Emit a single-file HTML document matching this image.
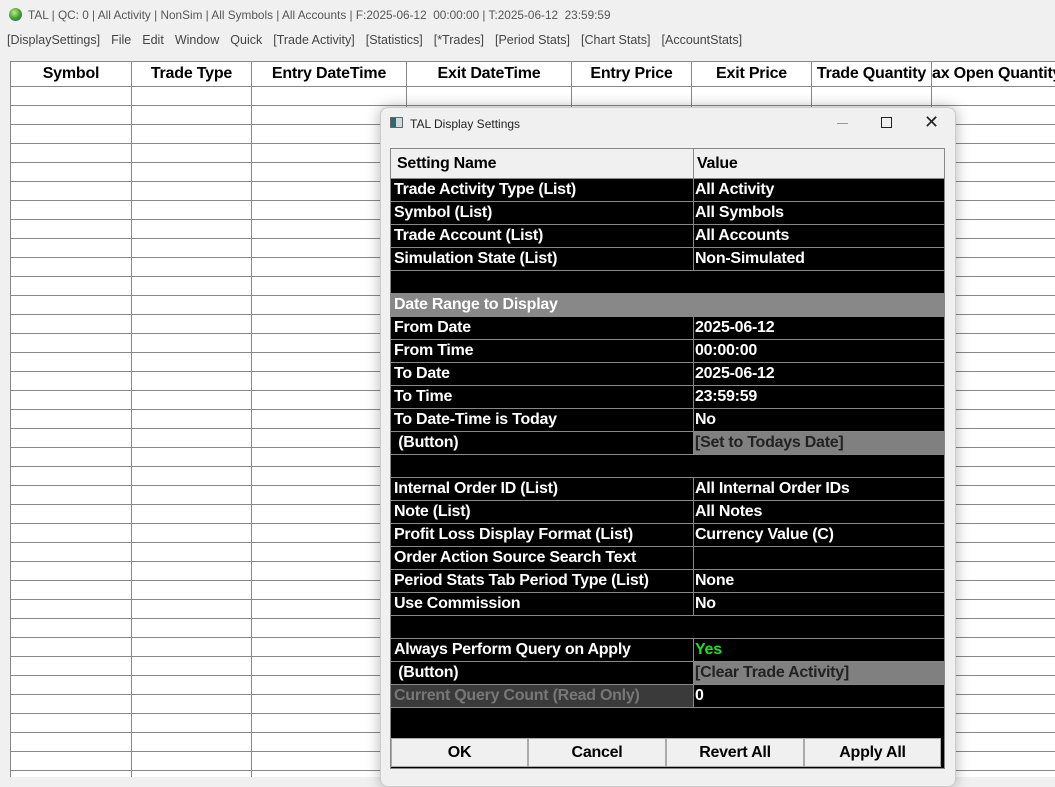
<!DOCTYPE html>
<html><head><meta charset="utf-8"><style>
*{margin:0;padding:0;box-sizing:border-box}
body{width:1055px;height:777px;overflow:hidden;background:#f0f0f0;font-family:"Liberation Sans",Arial,sans-serif;position:relative}
.t{position:absolute;left:28px;top:8px;font-size:11.8px;color:#555;white-space:nowrap}
.m{position:absolute;top:33px;left:7px;font-size:12.5px;color:#444;white-space:nowrap;word-spacing:0}
.m span{margin-right:11px}
.grid{position:absolute;left:10px;top:61px;width:1045px;height:716px;background:#fff;border-left:1px solid #888;border-top:1px solid #888;overflow:hidden}
.hd{position:absolute;top:0;height:25px;border-right:1px solid #888;border-bottom:1px solid #888;font-weight:bold;font-size:16px;text-align:center;line-height:24px;white-space:nowrap;overflow:hidden;background:#fff;letter-spacing:-0.2px}
.vl{position:absolute;top:25px;bottom:0;width:1px;background:#888}
.hl{position:absolute;left:0;right:0;height:1px;background:#888}
.dlg{position:absolute;left:380px;top:107px;width:576px;height:680px;background:#f0f0f0;border:1px solid #ccc;border-radius:8px;box-shadow:0 0 14px rgba(0,0,0,.3)}
.dt{position:absolute;left:29px;top:9px;font-size:12px;color:#222}
.tbl{position:absolute;left:9px;top:40px;width:555px;height:621px;background:#000;border:1px solid #888}
.r{position:absolute;left:0;width:553px;height:23px;border-bottom:1px solid #888;color:#fff;font-weight:bold;font-size:16px;line-height:22px;letter-spacing:-0.25px}
.r .a{position:absolute;left:3px;top:0;white-space:nowrap}
.r .b{position:absolute;left:302px;top:0;width:251px;height:22px;border-left:1px solid #888;padding-left:1px;white-space:nowrap}
.btn{position:absolute;height:29px;background:#f0f0f0;border:1px solid #aaa;font-weight:bold;font-size:16px;text-align:center;line-height:28px;color:#000;letter-spacing:-0.25px}
</style></head><body>
<div style="position:absolute;left:9px;top:8px;width:13px;height:13px;border-radius:50%;background:radial-gradient(circle at 40% 35%,#bfe88a,#3a9a2a 55%,#1d5a9a)"></div>
<div class="t">TAL | QC: 0 | All Activity | NonSim | All Symbols | All Accounts | F:2025-06-12&nbsp; 00:00:00 | T:2025-06-12&nbsp; 23:59:59</div>
<div class="m"><span>[DisplaySettings]</span><span>File</span><span>Edit</span><span>Window</span><span>Quick</span><span>[Trade Activity]</span><span>[Statistics]</span><span>[*Trades]</span><span>[Period Stats]</span><span>[Chart Stats]</span><span>[AccountStats]</span></div>
<div class="grid">
<div class="hd" style="left:0;width:121px">Symbol</div>
<div class="hd" style="left:121px;width:120px">Trade Type</div>
<div class="hd" style="left:241px;width:155px">Entry DateTime</div>
<div class="hd" style="left:396px;width:165px">Exit DateTime</div>
<div class="hd" style="left:561px;width:120px">Entry Price</div>
<div class="hd" style="left:681px;width:120px">Exit Price</div>
<div class="hd" style="left:801px;width:120px">Trade Quantity</div>
<div class="hd" style="left:921px;width:130px;text-align:left;text-indent:0">ax Open Quantity</div>
<div class="vl" style="left:120px"></div><div class="vl" style="left:240px"></div><div class="vl" style="left:395px"></div><div class="vl" style="left:560px"></div><div class="vl" style="left:680px"></div><div class="vl" style="left:800px"></div><div class="vl" style="left:920px"></div>
<div class="hl" style="top:43px"></div><div class="hl" style="top:62px"></div><div class="hl" style="top:81px"></div><div class="hl" style="top:100px"></div><div class="hl" style="top:119px"></div><div class="hl" style="top:138px"></div><div class="hl" style="top:157px"></div><div class="hl" style="top:176px"></div><div class="hl" style="top:195px"></div><div class="hl" style="top:214px"></div><div class="hl" style="top:233px"></div><div class="hl" style="top:252px"></div><div class="hl" style="top:271px"></div><div class="hl" style="top:290px"></div><div class="hl" style="top:309px"></div><div class="hl" style="top:328px"></div><div class="hl" style="top:347px"></div><div class="hl" style="top:366px"></div><div class="hl" style="top:385px"></div><div class="hl" style="top:404px"></div><div class="hl" style="top:423px"></div><div class="hl" style="top:442px"></div><div class="hl" style="top:461px"></div><div class="hl" style="top:480px"></div><div class="hl" style="top:499px"></div><div class="hl" style="top:518px"></div><div class="hl" style="top:537px"></div><div class="hl" style="top:556px"></div><div class="hl" style="top:575px"></div><div class="hl" style="top:594px"></div><div class="hl" style="top:613px"></div><div class="hl" style="top:632px"></div><div class="hl" style="top:651px"></div><div class="hl" style="top:670px"></div><div class="hl" style="top:689px"></div><div class="hl" style="top:708px"></div>
</div>
<div class="dlg">
<div style="position:absolute;left:9px;top:9px;width:13px;height:11px;border:1px solid #666;background:linear-gradient(90deg,#2a6a6a 45%,#cfd8dc 45%)"></div>
<div class="dt">TAL Display Settings</div>
<div style="position:absolute;left:456px;top:15px;width:11px;height:1px;background:#999"></div>
<div style="position:absolute;left:500px;top:9px;width:11px;height:11px;border:1.3px solid #222"></div>
<div style="position:absolute;left:543px;top:4px;font-size:18px;color:#222">✕</div>
<div class="tbl">
<div class="r" style="top:0;height:30px;background:#f0f0f0;color:#000;line-height:29px"><span class="a" style="left:6px">Setting Name</span><span class="b" style="height:29px;left:302px;padding-left:3px">Value</span></div>
<div class="r" style="top:30px"><span class="a">Trade Activity Type (List)</span><span class="b">All Activity</span></div>
<div class="r" style="top:53px"><span class="a">Symbol (List)</span><span class="b">All Symbols</span></div>
<div class="r" style="top:76px"><span class="a">Trade Account (List)</span><span class="b">All Accounts</span></div>
<div class="r" style="top:99px"><span class="a">Simulation State (List)</span><span class="b">Non-Simulated</span></div>
<div class="r" style="top:122px"></div>
<div class="r" style="top:145px;background:#888"><span class="a">Date Range to Display</span></div>
<div class="r" style="top:168px"><span class="a">From Date</span><span class="b">2025-06-12</span></div>
<div class="r" style="top:191px"><span class="a">From Time</span><span class="b">00:00:00</span></div>
<div class="r" style="top:214px"><span class="a">To Date</span><span class="b">2025-06-12</span></div>
<div class="r" style="top:237px"><span class="a">To Time</span><span class="b">23:59:59</span></div>
<div class="r" style="top:260px"><span class="a">To Date-Time is Today</span><span class="b">No</span></div>
<div class="r" style="top:283px"><span class="a">&nbsp;(Button)</span><span class="b" style="background:#808080;color:#222">[Set to Todays Date]</span></div>
<div class="r" style="top:306px"></div>
<div class="r" style="top:329px"><span class="a">Internal Order ID (List)</span><span class="b">All Internal Order IDs</span></div>
<div class="r" style="top:352px"><span class="a">Note (List)</span><span class="b">All Notes</span></div>
<div class="r" style="top:375px"><span class="a">Profit Loss Display Format (List)</span><span class="b">Currency Value (C)</span></div>
<div class="r" style="top:398px"><span class="a">Order Action Source Search Text</span><span class="b"></span></div>
<div class="r" style="top:421px"><span class="a">Period Stats Tab Period Type (List)</span><span class="b">None</span></div>
<div class="r" style="top:444px"><span class="a">Use Commission</span><span class="b">No</span></div>
<div class="r" style="top:467px"></div>
<div class="r" style="top:490px"><span class="a">Always Perform Query on Apply</span><span class="b" style="color:#1ee01e">Yes</span></div>
<div class="r" style="top:513px"><span class="a">&nbsp;(Button)</span><span class="b" style="background:#808080;color:#222">[Clear Trade Activity]</span></div>
<div class="r" style="top:536px;background:linear-gradient(90deg,#3a3a3a 302px,#000 302px)"><span class="a" style="color:#777">Current Query Count (Read Only)</span><span class="b">0</span></div>
<div class="btn" style="left:0;width:137px;top:589px">OK</div>
<div class="btn" style="left:137px;width:138px;top:589px">Cancel</div>
<div class="btn" style="left:275px;width:138px;top:589px">Revert All</div>
<div class="btn" style="left:413px;width:137px;top:589px">Apply All</div>
</div>
</div>
</body></html>
